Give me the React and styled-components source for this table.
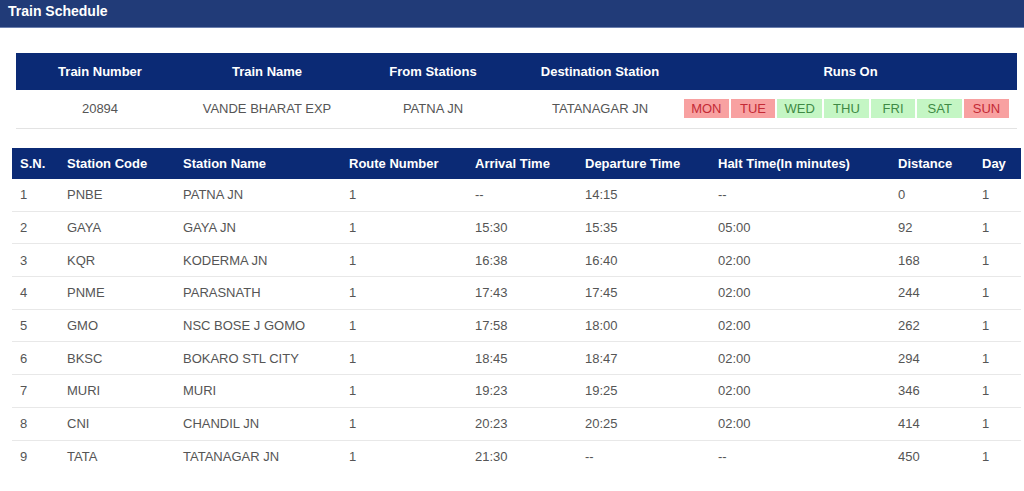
import React from "react";
import styled, { createGlobalStyle } from "styled-components";

const GlobalStyle = createGlobalStyle`
    body {
        margin: 0;
        background: #fff;
        font-family: "Liberation Sans", Arial, sans-serif;
    }
    th, td {
        box-sizing: border-box;
    }
`;

const Page = styled.div`
    width: 1024px;
    height: 491px;
    overflow: hidden;
    display: flex;
    flex-direction: column;
`;

const TitleBar = styled.div`
    height: 27px;
    background-color: #213b78;
    border-bottom: 1px solid #6b7fae;
    color: #fff;
    font-size: 14px;
    font-weight: 700;
    line-height: 23px;
    padding-left: 8px;
`;

const InfoTable = styled.table`
    margin: 25px 0 0 16px;
    width: 1001px;
    border-collapse: collapse;
    table-layout: fixed;
    font-size: 13px;
`;

const InfoHead = styled.th`
    background-color: #0b2a75;
    color: #fff;
    font-weight: 700;
    height: 37px;
    padding: 0;
    text-align: center;
    width: ${(p) => p.$w}px;
`;

const InfoCell = styled.td`
    height: 38px;
    padding: 0;
    text-align: center;
    color: #555;
    border-bottom: 1px solid #e3e3e3;
`;

const DayList = styled.div`
    display: flex;
    gap: 2px;
    padding-bottom: 1px;
`;

const Day = styled.span`
    width: 44.7px;
    height: 19px;
    line-height: 19px;
    text-align: center;
    background-color: ${(p) => (p.$on ? "#c4f6c4" : "#f8a1a1")};
    color: ${(p) => (p.$on ? "#3f8a45" : "#c42a36")};
`;

const StopTable = styled.table`
    margin: 19px 0 0 12px;
    width: 1009px;
    border-collapse: collapse;
    table-layout: fixed;
    font-size: 13px;
`;

const StopHead = styled.th`
    background-color: #0b2a75;
    color: #fff;
    font-weight: 700;
    height: 31px;
    padding: 0 0 0 8px;
    text-align: left;
    white-space: nowrap;
    width: ${(p) => p.$w}px;
`;

const StopRow = styled.tr`
    & + & td {
        border-top: 1px solid #e8e8e8;
    }
`;

const StopCell = styled.td`
    height: 32.7px;
    padding: 0 0 0 8px;
    color: #555;
`;

const days = [
    ["MON", false],
    ["TUE", false],
    ["WED", true],
    ["THU", true],
    ["FRI", true],
    ["SAT", true],
    ["SUN", false],
];

const stopCols = [
    ["S.N.", 47],
    ["Station Code", 116],
    ["Station Name", 166],
    ["Route Number", 126],
    ["Arrival Time", 110],
    ["Departure Time", 133],
    ["Halt Time(In minutes)", 180],
    ["Distance", 84],
    ["Day", 47],
];

const stops = [
    ["1", "PNBE", "PATNA JN", "1", "--", "14:15", "--", "0", "1"],
    ["2", "GAYA", "GAYA JN", "1", "15:30", "15:35", "05:00", "92", "1"],
    ["3", "KQR", "KODERMA JN", "1", "16:38", "16:40", "02:00", "168", "1"],
    ["4", "PNME", "PARASNATH", "1", "17:43", "17:45", "02:00", "244", "1"],
    ["5", "GMO", "NSC BOSE J GOMO", "1", "17:58", "18:00", "02:00", "262", "1"],
    ["6", "BKSC", "BOKARO STL CITY", "1", "18:45", "18:47", "02:00", "294", "1"],
    ["7", "MURI", "MURI", "1", "19:23", "19:25", "02:00", "346", "1"],
    ["8", "CNI", "CHANDIL JN", "1", "20:23", "20:25", "02:00", "414", "1"],
    ["9", "TATA", "TATANAGAR JN", "1", "21:30", "--", "--", "450", "1"],
];

const App = () => {
    return (
        <Page>
            <GlobalStyle />
            <TitleBar>Train Schedule</TitleBar>

            <InfoTable>
                <thead>
                    <tr>
                        <InfoHead $w={168}>Train Number</InfoHead>
                        <InfoHead $w={166}>Train Name</InfoHead>
                        <InfoHead $w={166}>From Stations</InfoHead>
                        <InfoHead $w={168}>Destination Station</InfoHead>
                        <InfoHead $w={333}>Runs On</InfoHead>
                    </tr>
                </thead>
                <tbody>
                    <tr>
                        <InfoCell>20894</InfoCell>
                        <InfoCell>VANDE BHARAT EXP</InfoCell>
                        <InfoCell>PATNA JN</InfoCell>
                        <InfoCell>TATANAGAR JN</InfoCell>
                        <InfoCell>
                            <DayList>
                                {days.map(([d, on]) => (
                                    <Day key={d} $on={on}>{d}</Day>
                                ))}
                            </DayList>
                        </InfoCell>
                    </tr>
                </tbody>
            </InfoTable>

            <StopTable>
                <thead>
                    <tr>
                        {stopCols.map(([label, w]) => (
                            <StopHead key={label} $w={w}>{label}</StopHead>
                        ))}
                    </tr>
                </thead>
                <tbody>
                    {stops.map((row) => (
                        <StopRow key={row[0]}>
                            {row.map((v, i) => (
                                <StopCell key={i}>{v}</StopCell>
                            ))}
                        </StopRow>
                    ))}
                </tbody>
            </StopTable>
        </Page>
    );
};

export default App;
